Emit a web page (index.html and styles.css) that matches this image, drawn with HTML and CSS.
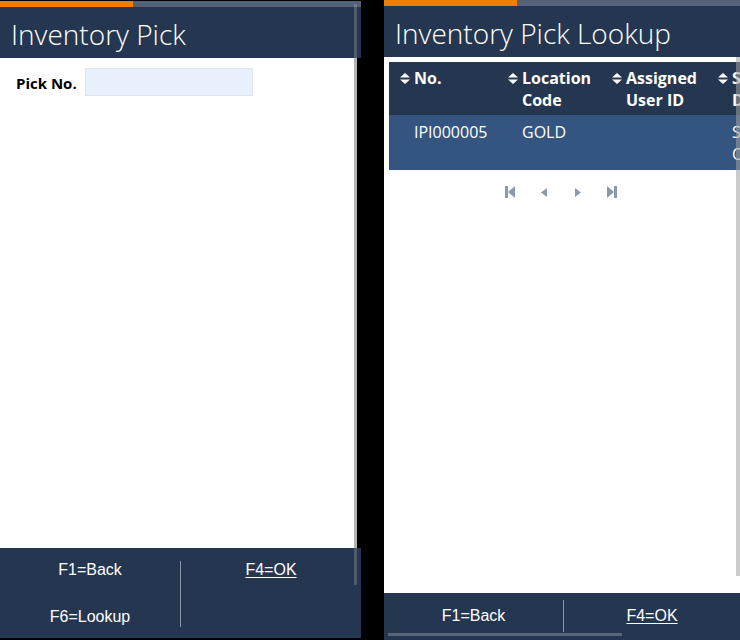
FILE: index.html
```html
<!DOCTYPE html>
<html lang="en">
<head>
    <meta charset="UTF-8">
    <meta name="viewport" content="width=device-width, initial-scale=1.0">
    <title>Inventory Pick</title>
    <link rel="stylesheet" href="styles.css">
</head>
<body>
    <div id="screens">
        <section class="panel panel-pick">
            <div class="progress"><span class="progress-done"></span></div>
            <header class="panel-head">
                <h1>Inventory Pick</h1>
            </header>
            <main class="panel-body">
                <div class="field">
                    <label for="pick-no">Pick No.</label>
                    <input id="pick-no" type="text">
                </div>
            </main>
            <footer class="keys keys-tall">
                <div class="key-col">
                    <span class="key">F1=Back</span>
                    <span class="key">F6=Lookup</span>
                </div>
                <div class="key-col key-col-right">
                    <span class="key key-default">F4=OK</span>
                </div>
            </footer>
            <div class="scroll-v"></div>
        </section>

        <section class="panel panel-lookup">
            <div class="progress"><span class="progress-done"></span></div>
            <header class="panel-head">
                <h1>Inventory Pick Lookup</h1>
            </header>
            <main class="panel-body lookup-body">
                <table class="grid">
                    <colgroup>
                        <col style="width: 108px">
                        <col style="width: 104px">
                        <col style="width: 106px">
                        <col style="width: 110px">
                    </colgroup>
                    <thead>
                        <tr>
                            <th><div class="th-inner"><svg class="sort" width="10" height="11" viewBox="0 0 10 11"><polygon points="5,0 10,4.6 0,4.6"/><polygon points="0,6.4 10,6.4 5,11"/></svg><span>No.</span></div></th>
                            <th><div class="th-inner"><svg class="sort" width="10" height="11" viewBox="0 0 10 11"><polygon points="5,0 10,4.6 0,4.6"/><polygon points="0,6.4 10,6.4 5,11"/></svg><span>Location Code</span></div></th>
                            <th><div class="th-inner"><svg class="sort" width="10" height="11" viewBox="0 0 10 11"><polygon points="5,0 10,4.6 0,4.6"/><polygon points="0,6.4 10,6.4 5,11"/></svg><span>Assigned User ID</span></div></th>
                            <th><div class="th-inner"><svg class="sort" width="10" height="11" viewBox="0 0 10 11"><polygon points="5,0 10,4.6 0,4.6"/><polygon points="0,6.4 10,6.4 5,11"/></svg><span>Source Document</span></div></th>
                        </tr>
                    </thead>
                    <tbody>
                        <tr class="selected">
                            <td>IPI000005</td>
                            <td>GOLD</td>
                            <td></td>
                            <td>Sales Order</td>
                        </tr>
                    </tbody>
                </table>
                <div class="pager">
                    <button class="page-btn" title="First"><svg width="10" height="12" viewBox="0 0 10 12"><rect x="0" y="0" width="3" height="12"/><polygon points="10,0 10,12 3,6"/></svg></button>
                    <button class="page-btn" title="Previous"><svg width="6" height="9" viewBox="0 0 6 9"><polygon points="6,0 6,9 0,4.5"/></svg></button>
                    <button class="page-btn" title="Next"><svg width="6" height="9" viewBox="0 0 6 9"><polygon points="0,0 6,4.5 0,9"/></svg></button>
                    <button class="page-btn" title="Last"><svg width="10" height="12" viewBox="0 0 10 12"><polygon points="0,0 7,6 0,12"/><rect x="7" y="0" width="3" height="12"/></svg></button>
                </div>
            </main>
            <footer class="keys keys-short">
                <div class="key-col">
                    <span class="key">F1=Back</span>
                </div>
                <div class="key-col key-col-right">
                    <span class="key key-default">F4=OK</span>
                </div>
            </footer>
            <div class="scroll-v"></div>
            <div class="scroll-h"></div>
        </section>
    </div>
</body>
</html>
```

FILE: styles.css
```css
html, body {
    margin: 0;
    padding: 0;
    background-color: #000000;
}
body {
    font-family: 'Open Sans', 'Liberation Sans', sans-serif;
    color: #000000;
}
#screens {
    display: flex;
    align-items: flex-start;
    gap: 23px;
    width: 740px;
    height: 640px;
    overflow: hidden;
}
.panel {
    position: relative;
    display: flex;
    flex-direction: column;
    overflow: hidden;
}
.panel-pick {
    width: 361px;
    height: 637px;
    margin-top: 1px;
}
.panel-lookup {
    width: 356px;
    height: 640px;
}
.progress {
    height: 6px;
    background-color: #536278;
    flex: none;
}
.progress-done {
    display: block;
    width: 133px;
    height: 100%;
    background-color: #f07d00;
}
.panel-head {
    flex: none;
    height: 51px;
    background-color: #253750;
    box-sizing: border-box;
    padding: 8px 0 0 11px;
}
.panel-head h1 {
    margin: 0;
    font-size: 28px;
    font-weight: 300;
    line-height: 38px;
    color: #ffffff;
    white-space: nowrap;
}
.panel-body {
    flex: 1;
    background-color: #ffffff;
}
.panel-pick .panel-body {
    margin-right: 4px;
    border-right: 3px solid #b4b4b4;
}
.field {
    display: flex;
    align-items: center;
    gap: 8px;
    padding: 10px 0 0 16px;
}
.field label {
    font-size: 15px;
    font-weight: 700;
    line-height: 20px;
    margin-top: 2px;
}
.field input {
    width: 168px;
    height: 28px;
    box-sizing: border-box;
    margin: 0;
    border: 1px solid #dde4ee;
    background-color: #e8f0fe;
    font-family: inherit;
    font-size: 15px;
    padding: 0 6px;
}

/* function keys */
.keys {
    flex: none;
    display: grid;
    grid-template-columns: 180px 1fr;
    background-color: #253750;
    font-family: 'Liberation Sans', Arial, sans-serif;
    font-size: 16px;
    line-height: 16px;
    color: #ffffff;
}
.keys-tall {
    height: 90px;
    padding-top: 13px;
    box-sizing: border-box;
}
.keys-tall .key-col {
    height: 66px;
    box-sizing: border-box;
    padding-top: 1px;
    display: flex;
    flex-direction: column;
    align-items: center;
    gap: 31px;
}
.keys-short {
    height: 47px;
    padding-top: 7px;
    box-sizing: border-box;
    grid-template-columns: 179px 1fr;
}
.keys-short .key-col {
    height: 32px;
    box-sizing: border-box;
    padding-top: 8px;
    display: flex;
    flex-direction: column;
    align-items: center;
}
.key-col-right {
    border-left: 1px solid #8a95a6;
}
.key-default {
    text-decoration: underline;
    text-underline-offset: 2px;
}

/* scrollbars */
.scroll-v {
    position: absolute;
    width: 3px;
    background-color: rgba(180, 180, 180, 0.3);
}
.panel-pick .scroll-v {
    top: 3px;
    right: 4px;
    height: 581px;
}
.panel-lookup .scroll-v {
    top: 57px;
    right: 0;
    width: 4px;
    height: 519px;
    background-color: rgba(160, 160, 160, 0.55);
}
.scroll-h {
    position: absolute;
    left: 4px;
    bottom: 4px;
    width: 234px;
    height: 3px;
    background-color: #59657a;
}

/* lookup grid */
.lookup-body {
    padding: 5px;
}
.grid {
    table-layout: fixed;
    width: 428px;
    border-collapse: collapse;
    font-size: 16px;
    line-height: 22px;
}
.grid th {
    background-color: #253750;
    color: #ffffff;
    font-weight: 700;
    text-align: left;
    vertical-align: top;
    padding: 5px 4px 4px 11px;
}
.th-inner {
    display: flex;
    align-items: flex-start;
}
.sort {
    flex: none;
    fill: #ffffff;
    margin: 6px 4px 0 0;
}
.grid td {
    vertical-align: top;
    padding: 6px 4px 5px 25px;
    height: 44px;
}
.grid tr.selected td {
    background-color: #34557f;
    color: #ffffff;
}
.pager {
    display: flex;
    justify-content: center;
    padding-top: 16px;
    margin-right: 2px;
}
.page-btn {
    width: 34px;
    height: 12px;
    padding: 0;
    border: none;
    background: none;
    display: flex;
    align-items: center;
    justify-content: center;
    fill: #8e98a8;
    cursor: pointer;
}
```
